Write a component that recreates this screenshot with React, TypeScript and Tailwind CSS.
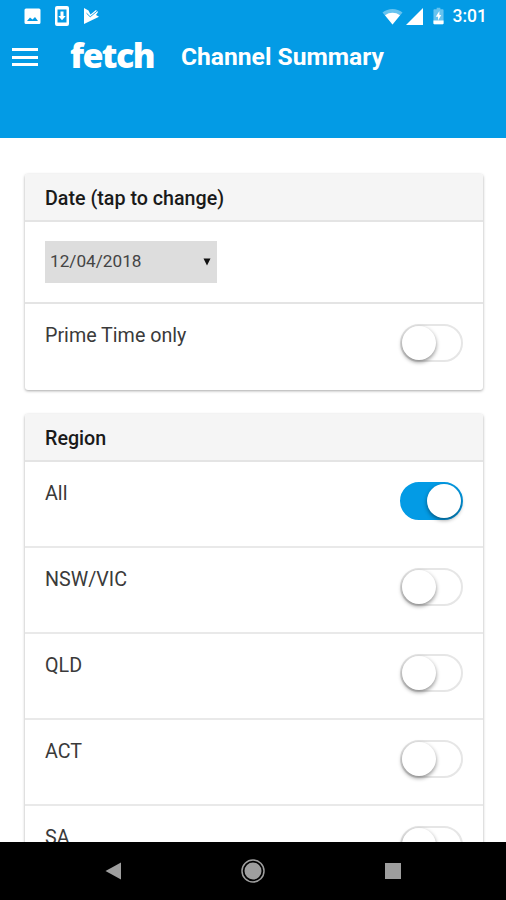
import clsx from 'clsx';

interface Region {
    name: string;
    enabled: boolean;
}

const regions: Region[] = [
    { name: 'All', enabled: true },
    { name: 'NSW/VIC', enabled: false },
    { name: 'QLD', enabled: false },
    { name: 'ACT', enabled: false },
    { name: 'SA', enabled: false },
];

function StatusBar() {
    return (
        <div className="flex h-8 items-center justify-between pl-[24px] pr-[19px] text-white">
            <div className="flex items-center gap-[14px]">
                {/* Picture */}
                <svg width="17" height="17" viewBox="0 0 17 17" fill="currentColor">
                    <path
                        fillRule="evenodd"
                        d="M2 0.5h13a1.5 1.5 0 0 1 1.5 1.5v12.5a1.5 1.5 0 0 1-1.5 1.5H2a1.5 1.5 0 0 1-1.5-1.5V2A1.5 1.5 0 0 1 2 0.5zM3 13h11l-3-4-2.5 2.600L6 9.500z"
                    />
                </svg>
                {/* System update */}
                <svg width="14" height="20" viewBox="0 0 14 20" fill="currentColor">
                    <path
                        fillRule="evenodd"
                        d="M2 0h10a2 2 0 0 1 2 2v16a2 2 0 0 1-2 2H2a2 2 0 0 1-2-2V2a2 2 0 0 1 2-2zM2.5 3.5v13h9v-13zM5.5 5.5h3v4.500h2.200L7 14.200l-3.700-4.200h2.200z"
                    />
                </svg>
                {/* Play Store check */}
                <svg width="17" height="18" viewBox="0 0 17 18" fill="currentColor">
                    <path d="M1 1l4.500 2.600L7.500 7.500 13 3l2 2-2 3 3 1.800L1 17z" />
                    <path d="M3.500 6.200l3.700 3.600L14 4.200" fill="none" stroke="#039be5" strokeWidth="0.9" />
                </svg>
            </div>
            <div className="flex items-center">
                {/* Wifi */}
                <svg width="21" height="17" viewBox="0 0 21 17" fill="currentColor">
                    <path d="M0.5 4.5C6-0.2 15-0.2 20.5 4.5L10.5 16.5z" opacity="0.4" />
                    <path d="M3 7.300C7.500 4 13.500 4 18 7.300L10.5 16.5z" />
                </svg>
                {/* Signal */}
                <svg className="ml-[3px]" width="17" height="17" viewBox="0 0 17 17" fill="currentColor">
                    <path d="M17 0v17H0z" />
                </svg>
                {/* Battery */}
                <svg className="ml-[10px]" width="11" height="18" viewBox="0 0 12 18" fill="currentColor">
                    <path d="M4 0h4v1.500h2.500a1 1 0 0 1 1 1V17a1 1 0 0 1-1 1h-9a1 1 0 0 1-1-1V2.500a1 1 0 0 1 1-1H4z" opacity="0.4" />
                    <path d="M0.500 14h11v3a1 1 0 0 1-1 1h-9a1 1 0 0 1-1-1zM7 3.500L3 9.800h2.500V14L9 8H7z" />
                </svg>
                <span className="ml-[9px] text-[17.5px] leading-5 font-medium">3:01</span>
            </div>
        </div>
    );
}

function AppHeader() {
    return (
        <header className="h-[138px] shrink-0 bg-[#039be5]">
            <StatusBar />
            <div className="flex h-[50px] items-center pl-[12px] text-white">
                <div className="flex w-[26px] flex-col gap-[4.5px]">
                    <span className="h-[3px] bg-white" />
                    <span className="h-[3px] bg-white" />
                    <span className="h-[3px] bg-white" />
                </div>
                <span className="ml-[32px] w-[85px] -translate-y-0.5 font-['Open_Sans',sans-serif] text-[34px] leading-[50px] font-extrabold tracking-[-1.6px]">
                    fetch
                </span>
                <h1 className="ml-[26px] pt-px text-[24.6px] font-bold whitespace-nowrap">Channel Summary</h1>
            </div>
        </header>
    );
}

function Toggle({ enabled }: { enabled: boolean }) {
    return (
        <span
            role="switch"
            aria-checked={enabled}
            className={clsx(
                'flex h-[38px] w-[63px] shrink-0 items-center rounded-full border-2',
                enabled ? 'justify-end border-[#039be5] bg-[#039be5]' : 'border-[#e6e6e6] bg-white',
            )}
        >
            <span className="size-[34px] rounded-full bg-white shadow-[0_2px_4px_rgba(0,0,0,0.45)]" />
        </span>
    );
}

function CardTitle({ children }: { children: string }) {
    return (
        <h2 className="flex h-[48px] items-center border-b-2 border-[#e4e4e4] bg-[#f5f5f5] px-5 pt-[4px] text-[19.7px] font-medium text-[#1a1a1a]">
            {children}
        </h2>
    );
}

function ToggleRow({ label, enabled }: { label: string; enabled: boolean }) {
    return (
        <div className="flex h-[86.2px] items-start justify-between px-5 pt-5">
            <span className="text-[19.7px] leading-6 text-[#3a3a3a]">{label}</span>
            <Toggle enabled={enabled} />
        </div>
    );
}

function NavBar() {
    return (
        <nav className="flex h-[58px] shrink-0 items-center justify-between bg-black pr-[105px] pl-[104px]">
            <svg width="18" height="18" viewBox="0 0 18 18" fill="#9e9e9e">
                <path d="M1.500 9L17 0.500v17z" />
            </svg>
            <svg className="mr-0.5" width="24" height="24" viewBox="0 0 24 24">
                <circle cx="12" cy="12" r="11" fill="none" stroke="#9e9e9e" strokeWidth="1.5" />
                <circle cx="12" cy="12" r="8.5" fill="#9e9e9e" />
            </svg>
            <span className="size-4 bg-[#9e9e9e]" />
        </nav>
    );
}

export default function App() {
    return (
        <div className="flex h-[900px] w-[506px] flex-col overflow-hidden bg-white font-[Roboto,sans-serif]">
            <AppHeader />
            <main className="flex min-h-0 flex-1 flex-col gap-[23.5px] overflow-hidden pt-[36px] pr-[23px] pl-[25px]">
                {/* Date */}
                <section className="shrink-0 overflow-hidden rounded-[3px] bg-white shadow-[0_1px_3px_rgba(0,0,0,0.35)]">
                    <CardTitle>Date (tap to change)</CardTitle>
                    <div className="h-[82px] border-b-2 border-[#e4e4e4] px-5 pt-[19px]">
                        <button className="flex h-[42px] w-[172px] items-center justify-between bg-[#dddddd] pr-[6px] pl-[5px] text-[#444]">
                            <span className="text-[17.2px]">12/04/2018</span>
                            <svg width="8" height="8" viewBox="0 0 8 8" fill="#111">
                                <path d="M0.500 0.500h7L4 7.500z" />
                            </svg>
                        </button>
                    </div>
                    <ToggleRow label="Prime Time only" enabled={false} />
                </section>

                {/* Region */}
                <section className="shrink-0 divide-y-2 divide-[#e9e9e9] overflow-hidden rounded-[3px] bg-white shadow-[0_1px_3px_rgba(0,0,0,0.35)]">
                    <CardTitle>Region</CardTitle>
                    {regions.map((region) => (
                        <ToggleRow key={region.name} label={region.name} enabled={region.enabled} />
                    ))}
                </section>
            </main>
            <NavBar />
        </div>
    );
}
